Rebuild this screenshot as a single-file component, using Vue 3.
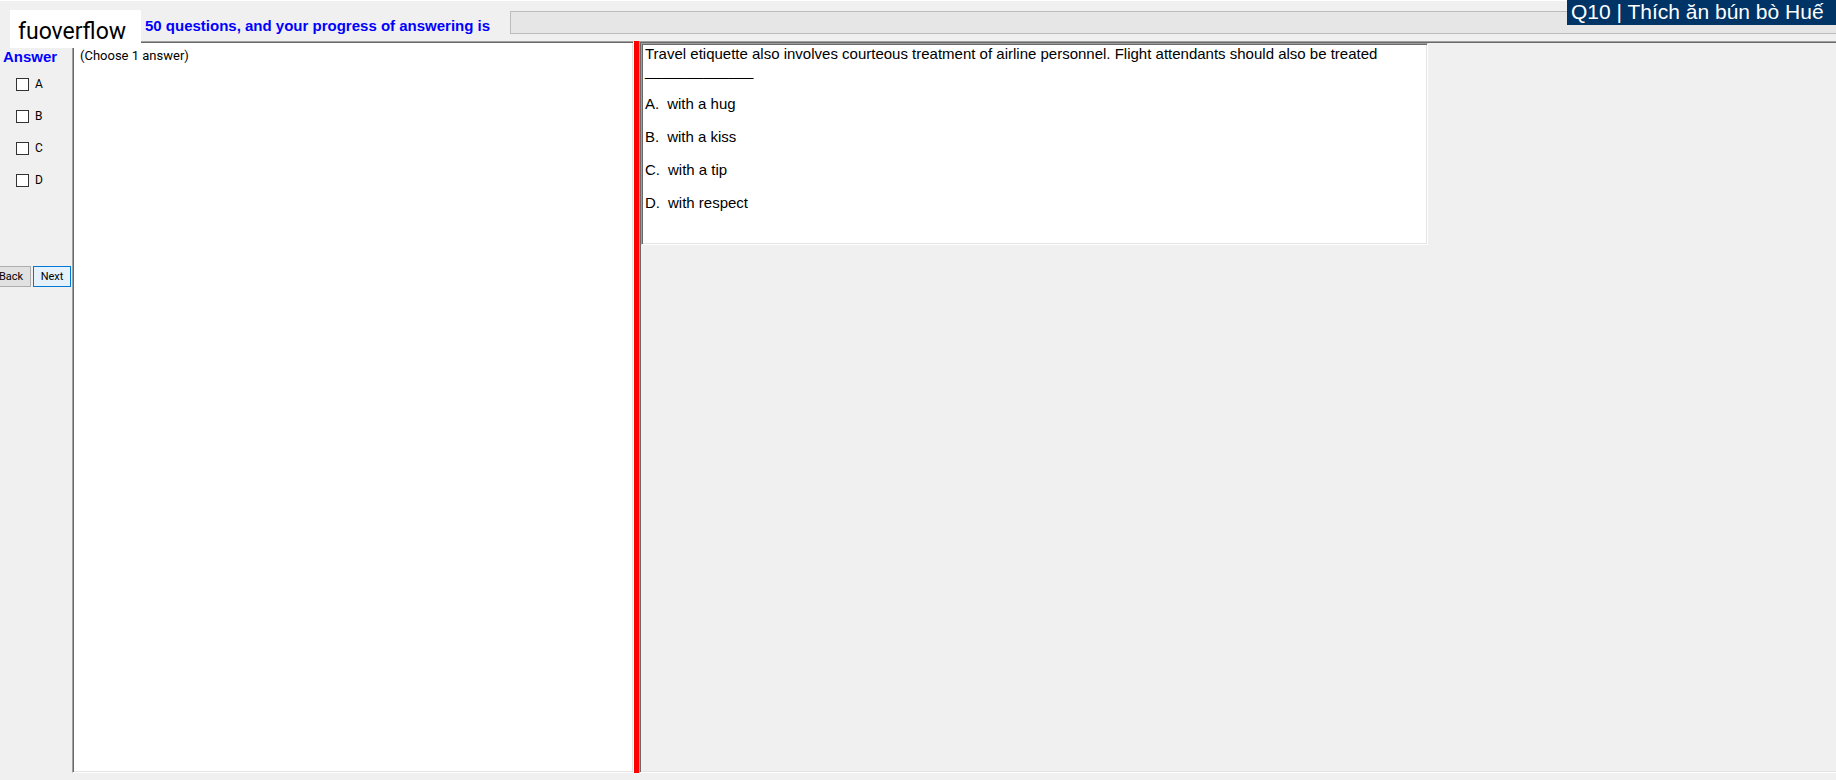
<script setup>
import { ref } from 'vue'

const letters = ['A', 'B', 'C', 'D']
const picked = ref([])
const options = [
  { key: 'A', text: 'with a hug' },
  { key: 'B', text: 'with a kiss' },
  { key: 'C', text: 'with a tip' },
  { key: 'D', text: 'with respect' },
]
</script>

<template>
  <div class="exam">
    <header class="top">
      <span class="brand">fuoverflow</span>
      <span id="progress-label" class="summary">50 questions, and your progress of answering is</span>
      <div class="progress" role="progressbar" aria-labelledby="progress-label" aria-valuenow="0"></div>
      <span class="badge">Q10 | Thích ăn bún bò Huế</span>
    </header>

    <main class="body">
      <aside class="side">
        <h2 class="title">Answer</h2>
        <div class="checks">
          <label v-for="l in letters" :key="l" class="check">
            <input v-model="picked" type="checkbox" :value="l" />
            <span>{{ l }}</span>
          </label>
        </div>
        <div class="nav">
          <button type="button" class="btn">Back</button>
          <button type="button" class="btn next">Next</button>
        </div>
      </aside>

      <section class="panel sheet">(Choose 1 answer)</section>
      <div class="splitter" role="separator"></div>
      <section class="panel view">
        <article class="question">
          <p class="stem">Travel etiquette also involves courteous treatment of airline personnel. Flight attendants should also be treated _____________</p>
          <p v-for="o in options" :key="o.key" class="option">
            <span>{{ o.key }}.</span>
            <span>{{ o.text }}</span>
          </p>
        </article>
      </section>
    </main>
  </div>
</template>

<style>
body {
  margin: 0;
  background: #f0f0f0;
}
</style>

<style scoped>
.exam {
  display: flex;
  flex-direction: column;
  box-sizing: border-box;
  min-height: 100vh;
  padding-bottom: 7px;
  border-top: 1px solid #fff;
  background: #f0f0f0;
  color: #000;
  font-family: Roboto, "Liberation Sans", sans-serif;
  font-size: 11px;
}
.top {
  display: flex;
  align-items: flex-start;
  height: 40px;
  position: relative;
}
.brand {
  position: relative;
  z-index: 1;
  flex: none;
  box-sizing: border-box;
  width: 131px;
  height: 38px;
  margin: 9px 4px 0 10px;
  padding: 6px 0 0 8px;
  background: #fff;
  font-size: 23px;
  line-height: 32px;
}
.summary {
  flex: none;
  width: 365px;
  padding-top: 15px;
  color: #00f;
  font: bold 15px/20px "Liberation Sans", sans-serif;
  white-space: nowrap;
}
.progress {
  flex: 1;
  box-sizing: border-box;
  height: 23px;
  margin-top: 10px;
  border: 1px solid #bcbcbc;
  border-right: 0;
  background: #e6e6e6;
}
.badge {
  position: absolute;
  top: -1px;
  right: 0;
  box-sizing: border-box;
  width: 269px;
  padding: 0 0 2px 4px;
  background: #036;
  color: #fff;
  font: 21px/23px "Liberation Sans", sans-serif;
  white-space: nowrap;
}
.body {
  flex: 1;
  display: grid;
  grid-template-columns: 72px 562fr 5px 1197fr;
}
.panel {
  min-width: 0;
  border: 1px solid;
  border-color: #a0a0a0 #fff #fff #a0a0a0;
  box-shadow: inset 1px 1px #696969, inset -1px -1px #e3e3e3;
}
.sheet {
  padding: 6px 7px;
  background-color: #fff;
  font-size: 13px;
  line-height: 16px;
}
.splitter {
  background: #f00;
}
.view {
  padding: 1px;
  border-right: 0;
  box-shadow: inset 1px 1px #696969, inset 0 -1px #e3e3e3;
}
.question {
  box-sizing: border-box;
  width: 100%;
  max-width: 787px;
  min-height: 202px;
  padding: 1px 3px 0;
  border: 1px solid;
  border-color: #a0a0a0 #fff #fff #a0a0a0;
  box-shadow: inset 1px 1px #696969, inset -1px -1px #e3e3e3;
  background: #fff;
  font: 15px/22px "Liberation Sans", sans-serif;
}
.stem {
  max-width: 752px;
  margin: 0 0 14px;
  line-height: 17px;
}
.option {
  display: flex;
  gap: 8px;
  margin: 0 0 11px;
}
.title {
  margin: 0;
  padding: 7px 0 0 3px;
  color: #00f;
  font: bold 15px/18px "Liberation Sans", sans-serif;
}
.checks {
  display: flex;
  flex-direction: column;
  gap: 16px;
  padding: 10px 0 0 16px;
}
.check {
  display: flex;
  align-items: center;
  gap: 6px;
  height: 16px;
  font-size: 12px;
}
.check input {
  appearance: none;
  box-sizing: border-box;
  width: 13px;
  height: 13px;
  margin: 0;
  border: 1px solid #333;
  background: #fff;
}
.check input:checked {
  background: #0078d7;
}
.nav {
  display: flex;
  gap: 2px;
  margin: 78px 0 0 -9px;
}
.btn {
  box-sizing: border-box;
  width: 40px;
  height: 21px;
  padding: 0;
  border: 1px solid #adadad;
  background: #e1e1e1;
  color: #000;
  font: inherit;
}
.next {
  width: 38px;
  border-color: #0078d7;
  background: #e5f1fb;
}
</style>
